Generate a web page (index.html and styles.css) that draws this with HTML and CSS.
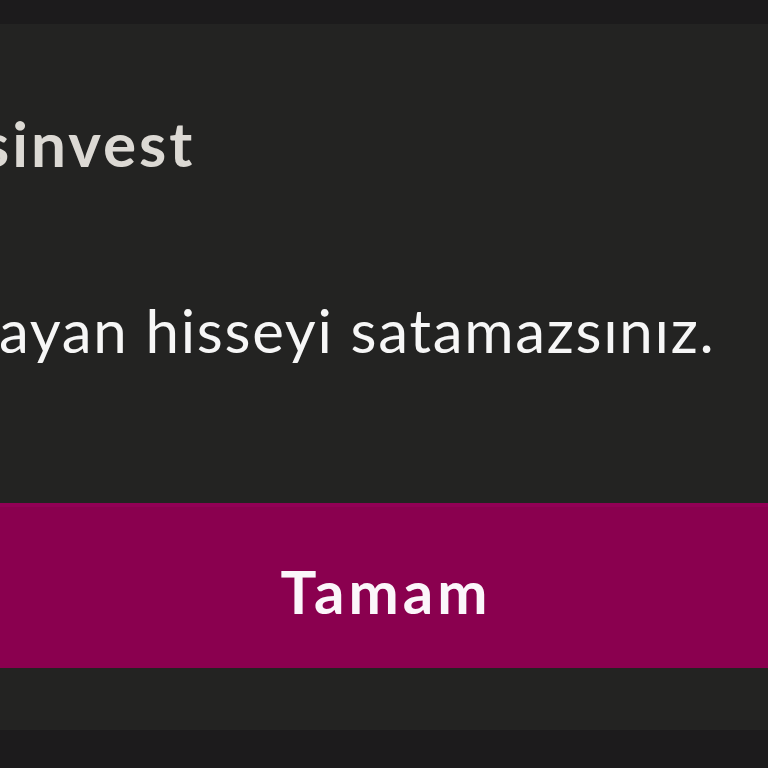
FILE: index.html
```html
<!DOCTYPE html>
<html lang="tr">
<head>
<meta charset="utf-8">
<title>Uyarı</title>
<link rel="stylesheet" href="styles.css">
</head>
<body>
<div class="topbar"></div>
<div class="dialog">
  <div class="title">sinvest</div>
  <div class="message">ayan hisseyi satamazsınız.</div>
  <div class="button">Tamam</div>
</div>
</body>
</html>
```
FILE: styles.css
```css
html, body {
  margin: 0;
  padding: 0;
}
body {
  width: 768px;
  height: 768px;
  overflow: hidden;
  background: #1c1b1c;
  font-family: Lato, "Noto Sans", sans-serif;
}
.topbar {
  height: 24px;
  background: #1c1b1c;
}
.dialog {
  background: #232322;
  height: 706px;
  box-sizing: border-box;
  padding-top: 82px;
  white-space: nowrap;
  overflow: hidden;
}
.title {
  font-size: 62px;
  line-height: 74px;
  font-weight: 700;
  letter-spacing: 3px;
  color: #dcd9d4;
  margin-left: -18px;
}
.message {
  font-size: 60px;
  line-height: 72px;
  font-weight: 400;
  letter-spacing: 1.7px;
  color: #f6f6f6;
  margin-top: 114px;
  margin-left: -1px;
}
.button {
  margin-top: 137px;
  height: 165px;
  box-sizing: border-box;
  padding-top: 48px;
  padding-left: 4px;
  background: #8a004f;
  border-top: 4px solid #920056;
  color: #fbf6fa;
  font-size: 60px;
  line-height: 72px;
  font-weight: 700;
  letter-spacing: 4px;
  text-align: center;
}
```
